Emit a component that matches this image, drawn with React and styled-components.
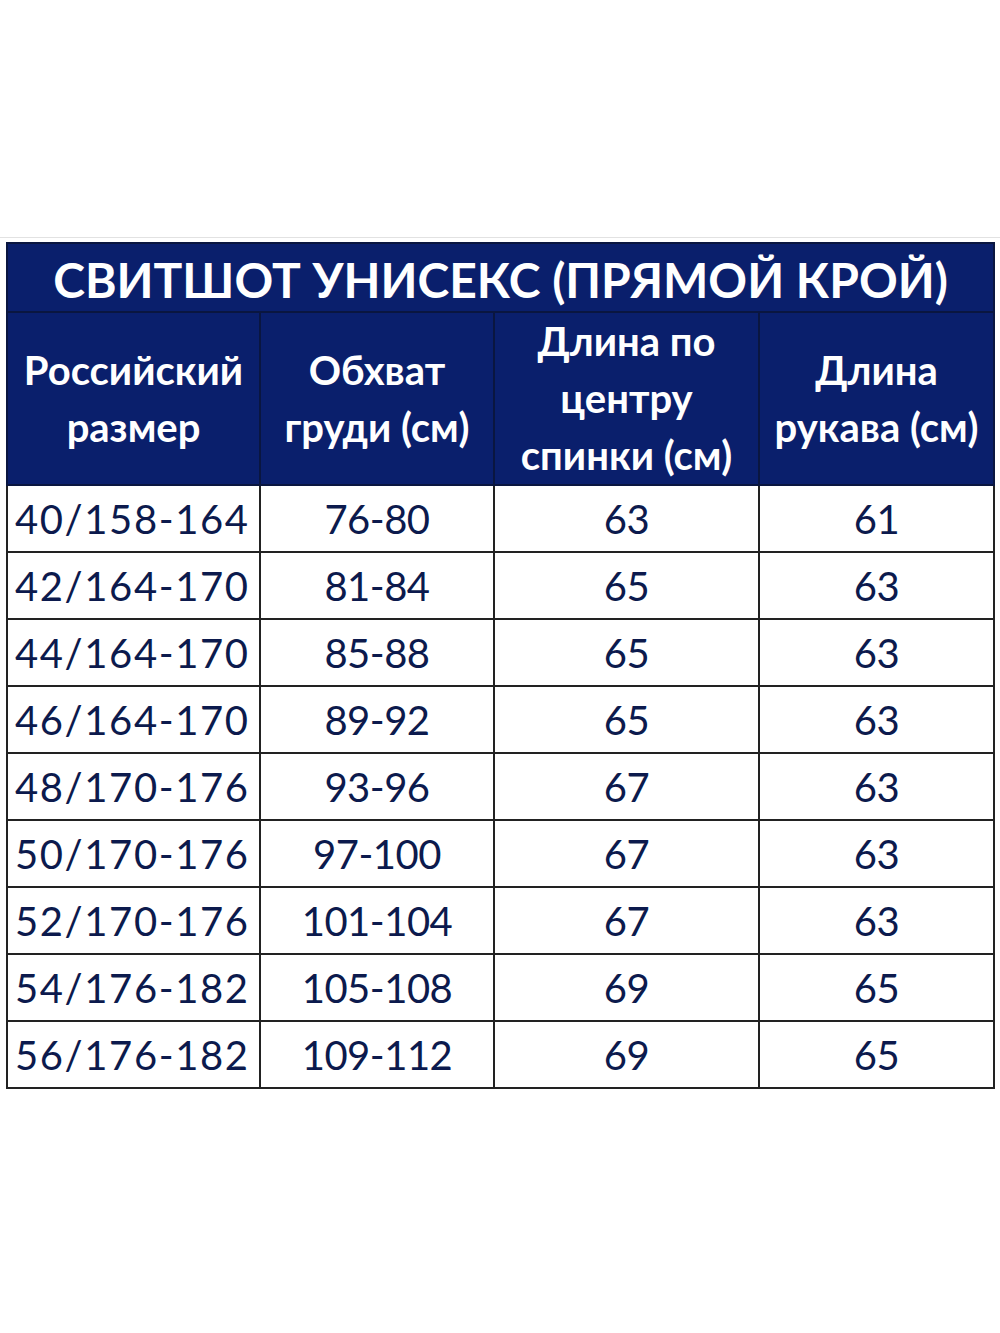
import styled, { createGlobalStyle } from "styled-components";

const GlobalStyle = createGlobalStyle`
  body {
    margin: 0;
    background: #fff;
    font-family: Lato, "Open Sans", sans-serif;
  }
`;

const rows = [
  ["40/158-164", "76-80", "63", "61"],
  ["42/164-170", "81-84", "65", "63"],
  ["44/164-170", "85-88", "65", "63"],
  ["46/164-170", "89-92", "65", "63"],
  ["48/170-176", "93-96", "67", "63"],
  ["50/170-176", "97-100", "67", "63"],
  ["52/170-176", "101-104", "67", "63"],
  ["54/176-182", "105-108", "69", "65"],
  ["56/176-182", "109-112", "69", "65"],
];

const App = () => {
  return (
    <>
      <GlobalStyle />
      <Page>
        <GridStrip />
        <SizeTable>
          <colgroup>
            <col style={{ width: 253 }} />
            <col style={{ width: 234 }} />
            <col style={{ width: 265 }} />
            <col style={{ width: 235 }} />
          </colgroup>
          <thead>
            <tr>
              <Title colSpan={4}>СВИТШОТ УНИСЕКС (ПРЯМОЙ КРОЙ)</Title>
            </tr>
            <tr>
              <HeadCell>
                Российский
                <br />
                размер
              </HeadCell>
              <HeadCell>
                Обхват
                <br />
                груди (см)
              </HeadCell>
              <HeadCell>
                Длина по
                <br />
                центру
                <br />
                спинки (см)
              </HeadCell>
              <HeadCell>
                Длина
                <br />
                рукава (см)
              </HeadCell>
            </tr>
          </thead>
          <tbody>
            {rows.map((r) => (
              <tr key={r[0]}>
                <SizeCell>{r[0]}</SizeCell>
                <Cell>{r[1]}</Cell>
                <Cell>{r[2]}</Cell>
                <Cell>{r[3]}</Cell>
              </tr>
            ))}
          </tbody>
        </SizeTable>
      </Page>
    </>
  );
};

export default App;

const Page = styled.div`
  padding-top: 237px;
  height: 1333px;
  box-sizing: border-box;
`;

const GridStrip = styled.div`
  height: 4px;
  border-top: 1px solid #e2e2e2;
`;

const SizeTable = styled.table`
  border-collapse: collapse;
  table-layout: fixed;
  width: 987px;
  margin-left: 6px;
`;

const Title = styled.th`
  height: 69px;
  padding: 4px 0 0;
  box-sizing: border-box;
  background: #0a1f6c;
  color: #fff;
  font-size: 48px;
  line-height: 56px;
  font-weight: 700;
  text-align: center;
  border: 2px solid #0a1640;
  white-space: nowrap;
`;

const HeadCell = styled.th`
  height: 168px;
  padding: 0;
  box-sizing: border-box;
  background: #0a1f6c;
  color: #fff;
  font-size: 40px;
  font-weight: 700;
  line-height: 57px;
  text-align: center;
  border: 2px solid #0a1640;
  white-space: nowrap;
`;

const Cell = styled.td`
  height: 67px;
  padding: 0;
  box-sizing: border-box;
  color: #0c1a4d;
  font-size: 40px;
  line-height: 48px;
  letter-spacing: -0.5px;
  text-align: center;
  border: 2px solid #222;
`;

const SizeCell = styled(Cell)`
  text-align: left;
  padding-left: 7px;
  letter-spacing: 1.6px;
  white-space: nowrap;
`;
